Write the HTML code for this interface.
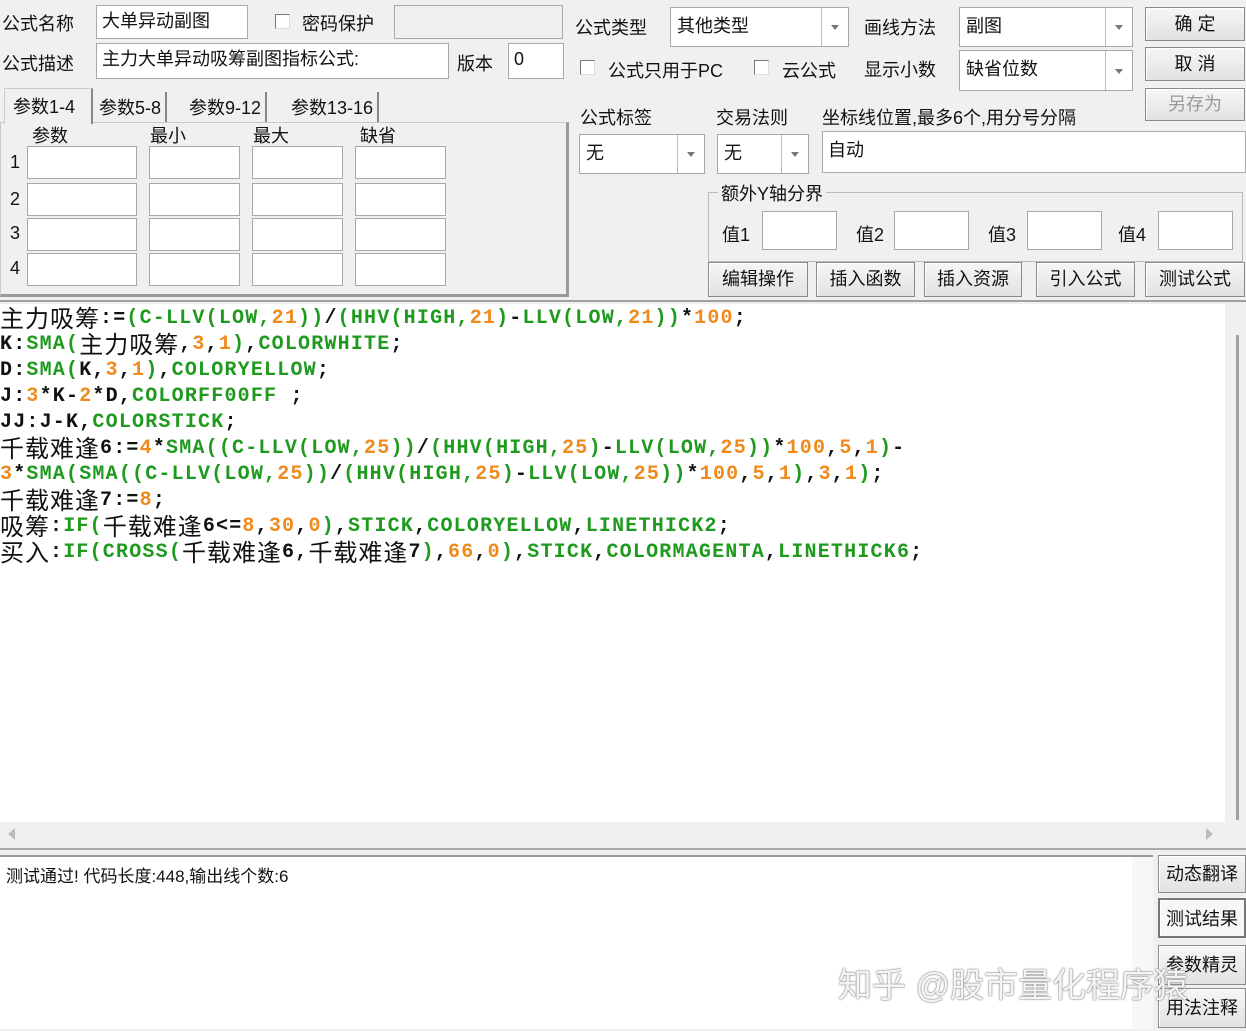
<!DOCTYPE html>
<html><head><meta charset="utf-8"><style>
*{box-sizing:border-box;margin:0;padding:0}
body{width:1246px;height:1031px;background:#f0f0f0;position:relative;overflow:hidden;font-family:"Liberation Sans","Noto Sans CJK SC",sans-serif;font-size:18px;color:#111}
.a{position:absolute;white-space:nowrap}
.in{position:absolute;background:#fff;border:1px solid #a8a8a8;padding:4px 5px;font-size:18px;line-height:22px}
.cb{position:absolute;width:15px;height:15px;background:#fff;border:1px solid #777;border-right-color:#ddd;border-bottom-color:#ddd}
.combo{position:absolute;background:#fff;border:1px solid #a8a8a8;padding:6px 6px;font-size:18px;line-height:24px}
.combo:after{content:"";position:absolute;right:0;top:0;bottom:0;width:26px;border-left:1px solid #bbb}
.combo:before{content:"";position:absolute;right:9px;top:50%;margin-top:-2px;border:4px solid transparent;border-top:5px solid #777;z-index:2}
.btn{position:absolute;background:linear-gradient(#f6f6f6,#e2e2e2);border:1px solid #8a8a8a;box-shadow:inset 1px 1px 0 #fff;text-align:center;font-size:18px}
.code{position:absolute;left:0;top:304px;width:1225px;height:518px;background:#fff;font-family:"Liberation Mono",monospace;font-weight:bold;font-size:20px;line-height:26px;padding-top:2px;letter-spacing:1.2px}
.code div{height:26px;white-space:pre;overflow:hidden}
.c{font-family:"Noto Sans CJK SC",sans-serif;font-weight:normal;font-size:24px;letter-spacing:1px;line-height:20px;display:inline-block;vertical-align:top;padding-top:1px}
.g{color:#1f9a1f}.o{color:#f08a1c}
</style></head><body>
<div class="a" style="left:2px;top:10px">公式名称</div>
<div class="in" style="left:96px;top:5px;width:152px;height:34px">大单异动副图</div>
<div class="cb" style="left:275px;top:14px"></div>
<div class="a" style="left:302px;top:10px">密码保护</div>
<div class="in" style="left:394px;top:5px;width:169px;height:34px;background:#f0f0f0"></div>
<div class="a" style="left:2px;top:50px">公式描述</div>
<div class="in" style="left:96px;top:43px;width:353px;height:36px">主力大单异动吸筹副图指标公式:</div>
<div class="a" style="left:457px;top:50px">版本</div>
<div class="in" style="left:508px;top:43px;width:56px;height:36px">0</div>

<div class="a" style="left:0;top:122px;width:569px;height:175px;border:1px solid #c8c8c8;border-right:3px solid #999;border-bottom:3px solid #999"></div>
<div class="a" style="left:4px;top:88px;width:89px;height:36px;background:#f0f0f0;border:1px solid #ccc;border-right:2px solid #888;border-bottom:none;padding:4px 8px">参数1-4</div>
<div class="a" style="left:95px;top:92px;padding:2px 4px;border-right:2px solid #888;height:30px">参数5-8</div>
<div class="a" style="left:185px;top:92px;padding:2px 4px;border-right:2px solid #888;height:30px">参数9-12</div>
<div class="a" style="left:287px;top:92px;padding:2px 4px;border-right:2px solid #888;height:30px">参数13-16</div>
<div class="a" style="left:32px;top:122px">参数</div>
<div class="a" style="left:150px;top:122px">最小</div>
<div class="a" style="left:253px;top:122px">最大</div>
<div class="a" style="left:360px;top:122px">缺省</div>
<div class="a" style="left:10px;top:152px">1</div><div class="a" style="left:10px;top:189px">2</div><div class="a" style="left:10px;top:223px">3</div><div class="a" style="left:10px;top:258px">4</div>
<div class="in" style="left:27px;top:146px;width:110px;height:33px"></div><div class="in" style="left:149px;top:146px;width:91px;height:33px"></div><div class="in" style="left:252px;top:146px;width:91px;height:33px"></div><div class="in" style="left:355px;top:146px;width:91px;height:33px"></div>
<div class="in" style="left:27px;top:183px;width:110px;height:33px"></div><div class="in" style="left:149px;top:183px;width:91px;height:33px"></div><div class="in" style="left:252px;top:183px;width:91px;height:33px"></div><div class="in" style="left:355px;top:183px;width:91px;height:33px"></div>
<div class="in" style="left:27px;top:218px;width:110px;height:33px"></div><div class="in" style="left:149px;top:218px;width:91px;height:33px"></div><div class="in" style="left:252px;top:218px;width:91px;height:33px"></div><div class="in" style="left:355px;top:218px;width:91px;height:33px"></div>
<div class="in" style="left:27px;top:253px;width:110px;height:33px"></div><div class="in" style="left:149px;top:253px;width:91px;height:33px"></div><div class="in" style="left:252px;top:253px;width:91px;height:33px"></div><div class="in" style="left:355px;top:253px;width:91px;height:33px"></div>

<div class="a" style="left:575px;top:14px">公式类型</div>
<div class="combo" style="left:670px;top:7px;width:179px;height:40px">其他类型</div>
<div class="a" style="left:864px;top:14px">画线方法</div>
<div class="combo" style="left:959px;top:7px;width:174px;height:40px">副图</div>
<div class="btn" style="left:1145px;top:7px;width:100px;height:34px;line-height:32px">确 定</div>
<div class="btn" style="left:1145px;top:47px;width:100px;height:34px;line-height:32px">取 消</div>
<div class="btn" style="left:1145px;top:88px;width:100px;height:33px;line-height:31px;color:#999">另存为</div>
<div class="cb" style="left:580px;top:60px"></div>
<div class="a" style="left:608px;top:57px">公式只用于PC</div>
<div class="cb" style="left:754px;top:60px"></div>
<div class="a" style="left:782px;top:57px">云公式</div>
<div class="a" style="left:864px;top:56px">显示小数</div>
<div class="combo" style="left:959px;top:50px;width:174px;height:41px">缺省位数</div>
<div class="a" style="left:580px;top:104px">公式标签</div>
<div class="a" style="left:716px;top:104px">交易法则</div>
<div class="a" style="left:822px;top:104px">坐标线位置,最多6个,用分号分隔</div>
<div class="combo" style="left:579px;top:134px;width:126px;height:40px">无</div>
<div class="combo" style="left:717px;top:134px;width:92px;height:40px">无</div>
<div class="in" style="left:822px;top:131px;width:424px;height:42px;padding-top:7px">自动</div>
<div class="a" style="left:708px;top:192px;width:535px;height:70px;border:1px solid #bbb"></div>
<div class="a" style="left:718px;top:180px;background:#f0f0f0;padding:0 3px">额外Y轴分界</div>
<div class="a" style="left:722px;top:221px">值1</div><div class="in" style="left:762px;top:211px;width:75px;height:39px"></div>
<div class="a" style="left:856px;top:221px">值2</div><div class="in" style="left:894px;top:211px;width:75px;height:39px"></div>
<div class="a" style="left:988px;top:221px">值3</div><div class="in" style="left:1027px;top:211px;width:75px;height:39px"></div>
<div class="a" style="left:1118px;top:221px">值4</div><div class="in" style="left:1158px;top:211px;width:75px;height:39px"></div>
<div class="btn" style="left:708px;top:262px;width:100px;height:35px;line-height:33px">编辑操作</div>
<div class="btn" style="left:816px;top:262px;width:99px;height:35px;line-height:33px">插入函数</div>
<div class="btn" style="left:924px;top:262px;width:98px;height:35px;line-height:33px">插入资源</div>
<div class="btn" style="left:1036px;top:262px;width:99px;height:35px;line-height:33px">引入公式</div>
<div class="btn" style="left:1145px;top:262px;width:100px;height:35px;line-height:33px">测试公式</div>

<div class="a" style="left:0;top:300px;width:1246px;height:2px;background:#a0a0a0"></div>
<div class="code">
<div><span class="c">主力吸筹</span>:=<span class="g">(C-LLV(LOW,</span><span class="o">21</span><span class="g">))</span>/<span class="g">(HHV(HIGH,</span><span class="o">21</span><span class="g">)</span>-<span class="g">LLV(LOW,</span><span class="o">21</span><span class="g">))</span>*<span class="o">100</span>;</div>
<div>K:<span class="g">SMA(</span><span class="c">主力吸筹</span>,<span class="o">3</span>,<span class="o">1</span><span class="g">)</span>,<span class="g">COLORWHITE</span>;</div>
<div>D:<span class="g">SMA(</span>K,<span class="o">3</span>,<span class="o">1</span><span class="g">)</span>,<span class="g">COLORYELLOW</span>;</div>
<div>J:<span class="o">3</span>*K-<span class="o">2</span>*D,<span class="g">COLORFF00FF</span> ;</div>
<div>JJ:J-K,<span class="g">COLORSTICK</span>;</div>
<div><span class="c">千载难逢</span>6:=<span class="o">4</span>*<span class="g">SMA((C-LLV(LOW,</span><span class="o">25</span><span class="g">))</span>/<span class="g">(HHV(HIGH,</span><span class="o">25</span><span class="g">)</span>-<span class="g">LLV(LOW,</span><span class="o">25</span><span class="g">))</span>*<span class="o">100</span>,<span class="o">5</span>,<span class="o">1</span><span class="g">)</span>-</div>
<div><span class="o">3</span>*<span class="g">SMA(SMA((C-LLV(LOW,</span><span class="o">25</span><span class="g">))</span>/<span class="g">(HHV(HIGH,</span><span class="o">25</span><span class="g">)</span>-<span class="g">LLV(LOW,</span><span class="o">25</span><span class="g">))</span>*<span class="o">100</span>,<span class="o">5</span>,<span class="o">1</span><span class="g">)</span>,<span class="o">3</span>,<span class="o">1</span><span class="g">)</span>;</div>
<div><span class="c">千载难逢</span>7:=<span class="o">8</span>;</div>
<div><span class="c">吸筹</span>:<span class="g">IF(</span><span class="c">千载难逢</span>6&lt;=<span class="o">8</span>,<span class="o">30</span>,<span class="o">0</span><span class="g">)</span>,<span class="g">STICK</span>,<span class="g">COLORYELLOW</span>,<span class="g">LINETHICK2</span>;</div>
<div><span class="c">买入</span>:<span class="g">IF(CROSS(</span><span class="c">千载难逢</span>6,<span class="c">千载难逢</span>7<span class="g">)</span>,<span class="o">66</span>,<span class="o">0</span><span class="g">)</span>,<span class="g">STICK</span>,<span class="g">COLORMAGENTA</span>,<span class="g">LINETHICK6</span>;</div>
</div>
<div class="a" style="left:1225px;top:304px;width:21px;height:518px;background:#f0f0f0"></div>
<div class="a" style="left:1236px;top:335px;width:3px;height:485px;background:#a0a0a0"></div>
<div class="a" style="left:0;top:822px;width:1246px;height:28px;background:#f0f0f0;border-bottom:2px solid #aaa"></div>
<div class="a" style="left:8px;top:828px;border:6px solid transparent;border-right:7px solid #bbb;border-left:none"></div>
<div class="a" style="left:1206px;top:828px;border:6px solid transparent;border-left:7px solid #bbb;border-right:none"></div>

<div class="a" style="left:0;top:855px;width:1153px;height:174px;background:#fff;border-top:2px solid #999"></div>
<div class="a" style="left:1132px;top:857px;width:21px;height:172px;background:#f7f7f7"></div>
<div class="a" style="left:6px;top:862px;font-size:17px">测试通过! 代码长度:448,输出线个数:6</div>
<div class="btn" style="left:1158px;top:855px;width:88px;height:38px;line-height:36px">动态翻译</div>
<div class="btn" style="left:1158px;top:898px;width:88px;height:40px;line-height:38px;background:#f7f7f7;border:2px solid #777">测试结果</div>
<div class="btn" style="left:1158px;top:945px;width:88px;height:40px;line-height:38px">参数精灵</div>
<div class="btn" style="left:1158px;top:988px;width:88px;height:40px;line-height:38px">用法注释</div>
<div class="a" style="left:838px;top:958px;font-size:34px;color:#f4f4f4;text-shadow:0 0 1px #666,0 0 2px #888">知乎 @股市量化程序猿</div>
</body></html>
